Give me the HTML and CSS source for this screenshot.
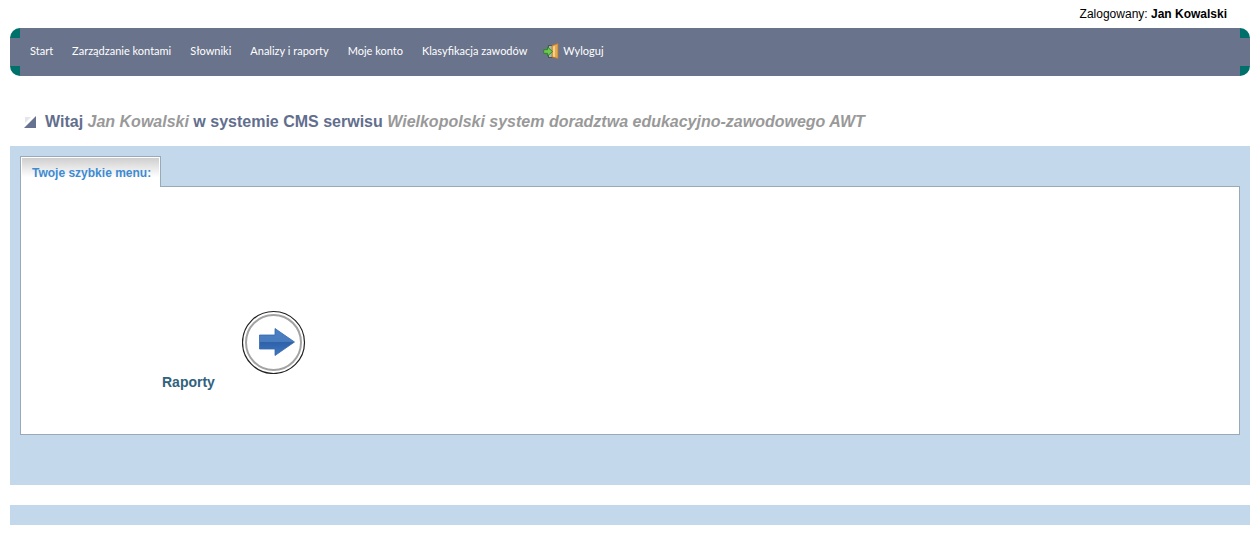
FILE: index.html
```html
<!DOCTYPE html>
<html lang="pl">
<head>
<meta charset="utf-8">
<title>CMS</title>
<link rel="stylesheet" href="styles.css">
</head>
<body>
<header>
  <p class="login">Zalogowany: <strong>Jan Kowalski</strong></p>
  <nav class="menu">
    <a href="#">Start</a>
    <a href="#">Zarządzanie kontami</a>
    <a href="#">Słowniki</a>
    <a href="#">Analizy i raporty</a>
    <a href="#">Moje konto</a>
    <a href="#">Klasyfikacja zawodów</a>
    <a href="#" class="logout">
      <svg width="16" height="16" viewBox="0 0 16 16" aria-hidden="true">
        <path d="M5 2h8v13H5z" fill="#4c574f"/>
        <path d="M6 3h5v11H6z" fill="#a9b8a8"/>
        <path d="M9 2.500 15 .5v15L9 14z" fill="#e2a952" stroke="#b9772c" stroke-width=".8"/>
        <path d="M10 3.500 12 3v11l-2-.5z" fill="#f6d18c"/>
        <path d="M.7 6.700h3.800V4l5 4.500-5 4.500v-2.700H.7z" fill="#6ccb4a" stroke="#2c7f29" stroke-width=".9"/>
      </svg>
      Wyloguj
    </a>
  </nav>
</header>
<main>
  <h1 class="welcome">
    <svg width="12" height="12" viewBox="0 0 12 12" aria-hidden="true">
      <path d="M1 1h6L1 7z" fill="#e4e6ea"/>
      <path d="M12 0v12H0z" fill="#66728f"/>
    </svg>
    <span>Witaj <em>Jan Kowalski</em> w systemie CMS serwisu <em>Wielkopolski system doradztwa edukacyjno-zawodowego AWT</em></span>
  </h1>
  <section class="panel">
    <h2 class="tab">Twoje szybkie menu:</h2>
    <div class="content">
      <a href="#" class="shortcut">
        <span>Raporty</span>
        <svg width="64" height="64" viewBox="0 0 64 64" aria-hidden="true">
          <defs>
            <linearGradient id="arrow" x1="0" y1="0" x2="0" y2="1">
              <stop offset="0" stop-color="#477fc5"/>
              <stop offset=".48" stop-color="#4a7cbd"/>
              <stop offset=".52" stop-color="#2e62ab"/>
              <stop offset="1" stop-color="#3f78c0"/>
            </linearGradient>
          </defs>
          <circle cx="31.500" cy="32.500" r="31" fill="#fff" stroke="#222" stroke-width="1.200"/>
          <circle cx="31.500" cy="32.500" r="27.500" fill="none" stroke="#a3a3a3" stroke-width="2"/>
          <path d="M17.500 25h15.500v-6.500l19.500 13.500-19.500 13.500v-6.500H17.500z" fill="url(#arrow)" stroke="#3567ab" stroke-width=".8"/>
        </svg>
      </a>
    </div>
  </section>
</main>
<footer class="footer"></footer>
</body>
</html>
```
FILE: styles.css
```css
body {
  margin: 0 9px 0 10px;
  background: #fff;
  color: #000;
  font: 12px/16px "Liberation Sans", Arial, sans-serif;
}

a {
  text-decoration: none;
}

.login {
  margin: 0;
  padding: 6px 23px 6px 0;
  text-align: right;
}

.menu {
  --corner: linear-gradient(#00706b, #00706b);
  display: flex;
  gap: 19px;
  padding: 15px 20px 17px;
  border-radius: 10px;
  background:
    var(--corner) left top / 10px 10px no-repeat,
    var(--corner) right top / 10px 10px no-repeat,
    var(--corner) left bottom / 10px 10px no-repeat,
    var(--corner) right bottom / 10px 10px no-repeat,
    #69738b;
  font-family: Lato, Tahoma, sans-serif;
  font-size: 11px;
}

.menu a {
  color: #fff;
}

.logout {
  display: flex;
  gap: 4px;
  margin-left: -3px;
}

.welcome {
  display: flex;
  align-items: center;
  gap: 9px;
  margin: 0;
  padding: 36px 14px 14px;
  color: #626e8d;
  font-size: 16px;
  line-height: 20px;
}

.welcome em {
  color: #999;
}

.panel {
  padding: 10px 10px 50px;
  background: #c4d8eb;
}

.tab {
  position: relative;
  width: fit-content;
  box-sizing: border-box;
  margin: 0 0 -1px;
  padding: 8px 9px 6px 11px;
  border: 1px solid #9aa9b8;
  border-bottom: 0;
  background: linear-gradient(#ccc, #fff 20px);
  box-shadow: inset 1px 1px #fff, inset -1px 0 #fff;
  color: #3e8bd2;
  font-size: 12px;
}

.content {
  padding: 123px 141px 42px;
  border: 1px solid #9aa9b8;
  background: #fff;
}

.shortcut {
  display: flex;
  width: fit-content;
  align-items: flex-start;
  gap: 27px;
  color: #30627e;
  font-size: 14px;
  font-weight: bold;
}

.shortcut span {
  padding-top: 62px;
  line-height: 20px;
}

.footer {
  height: 20px;
  margin-top: 20px;
  background: #c4d8eb;
}
```
